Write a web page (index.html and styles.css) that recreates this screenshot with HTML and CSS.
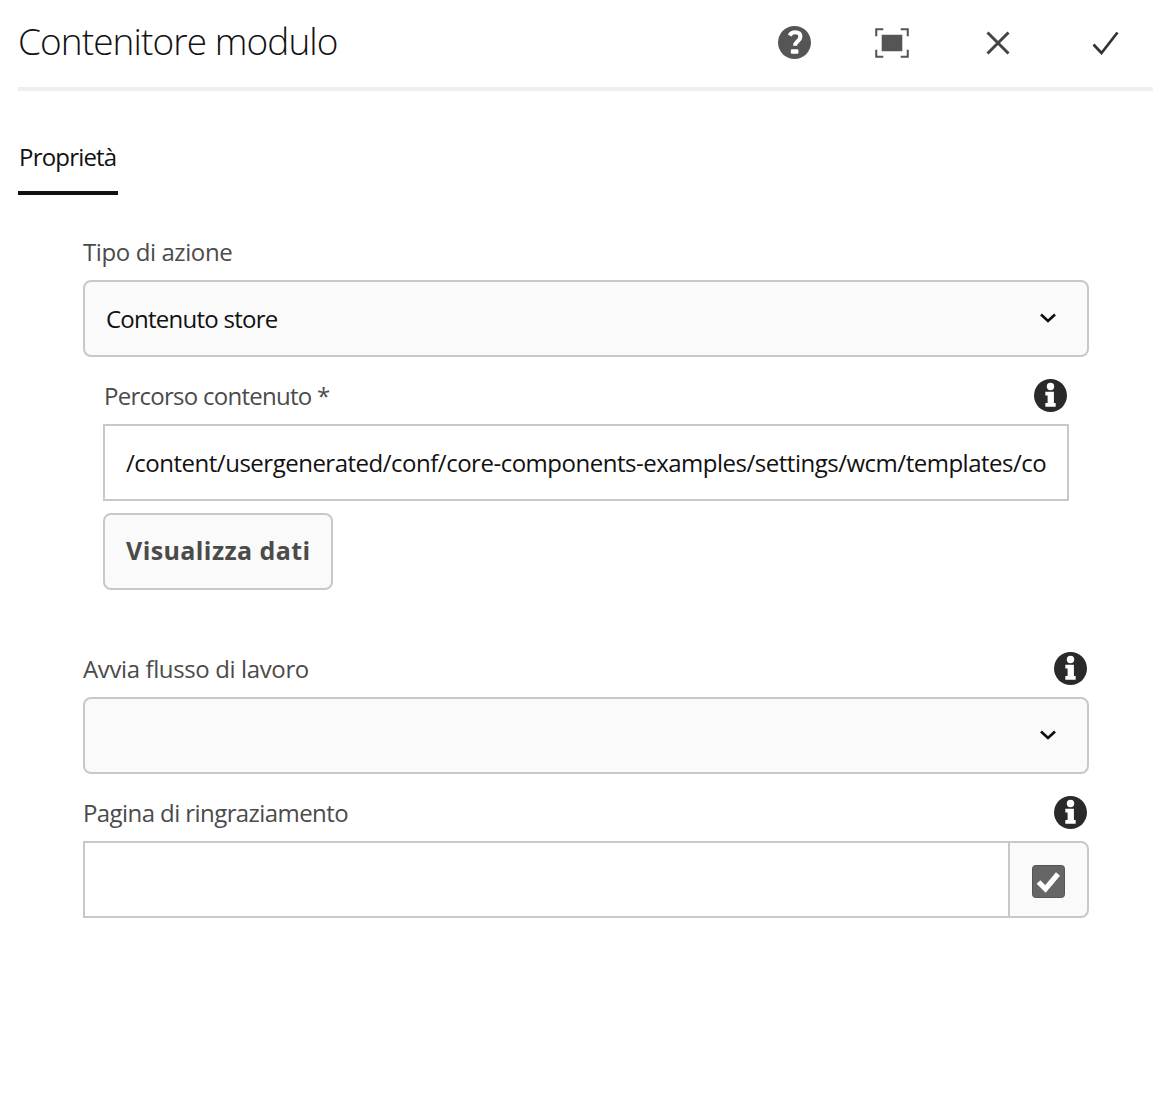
FILE: index.html
```html
<!DOCTYPE html>
<html lang="it">
<head>
<meta charset="utf-8">
<title>Contenitore modulo</title>
<link rel="stylesheet" href="styles.css">
</head>
<body>
<svg class="symbols" aria-hidden="true">
  <symbol id="info" viewBox="0 0 32 32">
    <circle cx="16" cy="16" r="16" fill="#2a2a2a"/>
    <circle cx="16" cy="7.3" r="3.6" fill="#fff"/>
    <path d="M11 12.3h8.300v11H21v3.700H11v-3.700h2.200v-7.300H11z" fill="#fff"/>
  </symbol>
  <symbol id="chevron" viewBox="0 0 18 12">
    <path d="M2 2.4l7 6.6 7-6.6" fill="none" stroke="#111" stroke-width="2.7"/>
  </symbol>
</svg>
<main class="dialog">
  <header class="header">
    <h1 class="title"><span>Contenitore modulo</span></h1>
    <nav class="actions">
      <svg class="icon-help" viewBox="0 0 32 32"><circle cx="16" cy="16" r="16" fill="#555"/><path d="M11.200 9.200C12.600 7 14.200 6.100 16.500 6.100c3.300 0 5.200 1.600 5.200 4.300 0 4.300-5.200 4.600-5.200 8.800" fill="none" stroke="#fff" stroke-width="4"/><rect x="12.400" y="22.600" width="7.400" height="4.400" rx="1.200" fill="#fff"/></svg>
      <svg class="icon-full" viewBox="0 0 33 29"><path d="M1.200 8V1.200H8M25 1.200h6.800V8M31.800 21v6.800H25M8 27.800H1.200V21" fill="none" stroke="#555" stroke-width="2"/><rect x="6.500" y="6.500" width="20" height="16" fill="#555"/></svg>
      <svg class="icon-close" viewBox="0 0 24 24"><path d="M1.500 1.500l21 21M22.500 1.500l-21 21" stroke="#444" stroke-width="3"/></svg>
      <svg class="icon-check" viewBox="0 0 27 24"><path d="M1.500 13.500l8 8.500L25.500 1.500" fill="none" stroke="#333" stroke-width="2.700"/></svg>
    </nav>
  </header>
  <div class="tabs"><a class="tab"><span>Proprietà</span></a></div>
  <form class="form">
    <div class="label"><span class="t-tipo">Tipo di azione</span></div>
    <div class="control select"><span class="t-store">Contenuto store</span><svg class="chevron"><use href="#chevron"/></svg></div>
    <section class="nested">
      <div class="label"><span class="t-percorso">Percorso contenuto *</span><svg class="info"><use href="#info"/></svg></div>
      <div class="control input"><span class="t-path">/content/usergenerated/conf/core-components-examples/settings/wcm/templates/co</span></div>
      <button class="control button" type="button"><span class="t-button">Visualizza dati</span></button>
    </section>
    <div class="label workflow"><span class="t-avvia">Avvia flusso di lavoro</span><svg class="info"><use href="#info"/></svg></div>
    <div class="control select"><span></span><svg class="chevron"><use href="#chevron"/></svg></div>
    <div class="label thanks"><span class="t-pagina">Pagina di ringraziamento</span><svg class="info"><use href="#info"/></svg></div>
    <div class="picker">
      <div class="control input"></div>
      <div class="control browse"><svg class="checkbox" viewBox="0 0 33 33"><rect x=".5" y=".5" width="32" height="32" rx="3" fill="#666" stroke="#555"/><path d="M6.500 17l7 7L26 9" fill="none" stroke="#fff" stroke-width="5.200"/></svg></div>
    </div>
  </form>
</main>
</body>
</html>
```
FILE: styles.css
```css
* { box-sizing: border-box; }
body { margin: 0; background: #fff; color: #111; font: 24px/32px "Open Sans", "Noto Sans", sans-serif; }
.symbols { display: none; }
svg { display: block; flex: none; }
span { white-space: nowrap; }
.dialog { min-height: 1102px; padding: 0 15px 0 18px; }
.header { height: 91px; border-bottom: 4px solid #efefef; display: flex; justify-content: space-between; align-items: flex-start; }
.title { margin: 0; padding-top: 18px; font-size: 37px; line-height: 46px; font-weight: 300; letter-spacing: -0.92px; }
.actions { display: flex; align-items: center; height: 85px; padding-right: 34px; }
.icon-help { width: 33px; height: 33px; margin-right: 64px; }
.icon-full { width: 34px; height: 30px; margin-right: 77px; }
.icon-close { width: 24px; height: 24px; margin-right: 82px; }
.icon-check { width: 27px; height: 24px; }
.tabs { display: flex; height: 104px; padding-top: 49px; }
.tab { width: 100px; height: 55px; padding: 1px 0 0 1px; border-bottom: 4px solid #111; letter-spacing: -0.8px; }
.form { padding: 41px 64px 0 65px; }
.label { display: flex; justify-content: space-between; height: 44px; color: #4b4b4b; }
.info { width: 33px; height: 33px; margin: -1px 2px 0 0; }
.control { display: flex; align-items: center; height: 77px; border: 2px solid #c8c8c8; padding: 0 21px; }
.select { justify-content: space-between; background: #fafafa; border-radius: 8px; padding-right: 30px; }
.chevron { width: 18px; height: 12px; margin-bottom: 2px; }
.nested { padding: 23px 20px 0; }
.input { background: #fff; overflow: hidden; }
.button { margin-top: 12px; width: 230px; padding-bottom: 3px; background: #fafafa; border-radius: 8px; color: #4b4b4b; font: 700 25px/32px "Open Sans", sans-serif; }
.workflow { margin-top: 63px; }
.thanks { margin-top: 23px; }
.picker { display: flex; }
.picker .input { flex: 1; border-right: 0; }
.browse { width: 81px; justify-content: center; background: #fafafa; border-radius: 0 8px 8px 0; padding: 3px 0 0; }
.checkbox { width: 33px; height: 33px; }
.t-tipo { letter-spacing: -0.4px; }
.t-store { letter-spacing: -0.75px; }
.t-percorso { letter-spacing: -0.73px; padding-left: 1px; }
.t-path { letter-spacing: -0.49px; }
.t-button { letter-spacing: 0.4px; }
.t-avvia { letter-spacing: -0.38px; }
.t-pagina { letter-spacing: -0.58px; }
```
